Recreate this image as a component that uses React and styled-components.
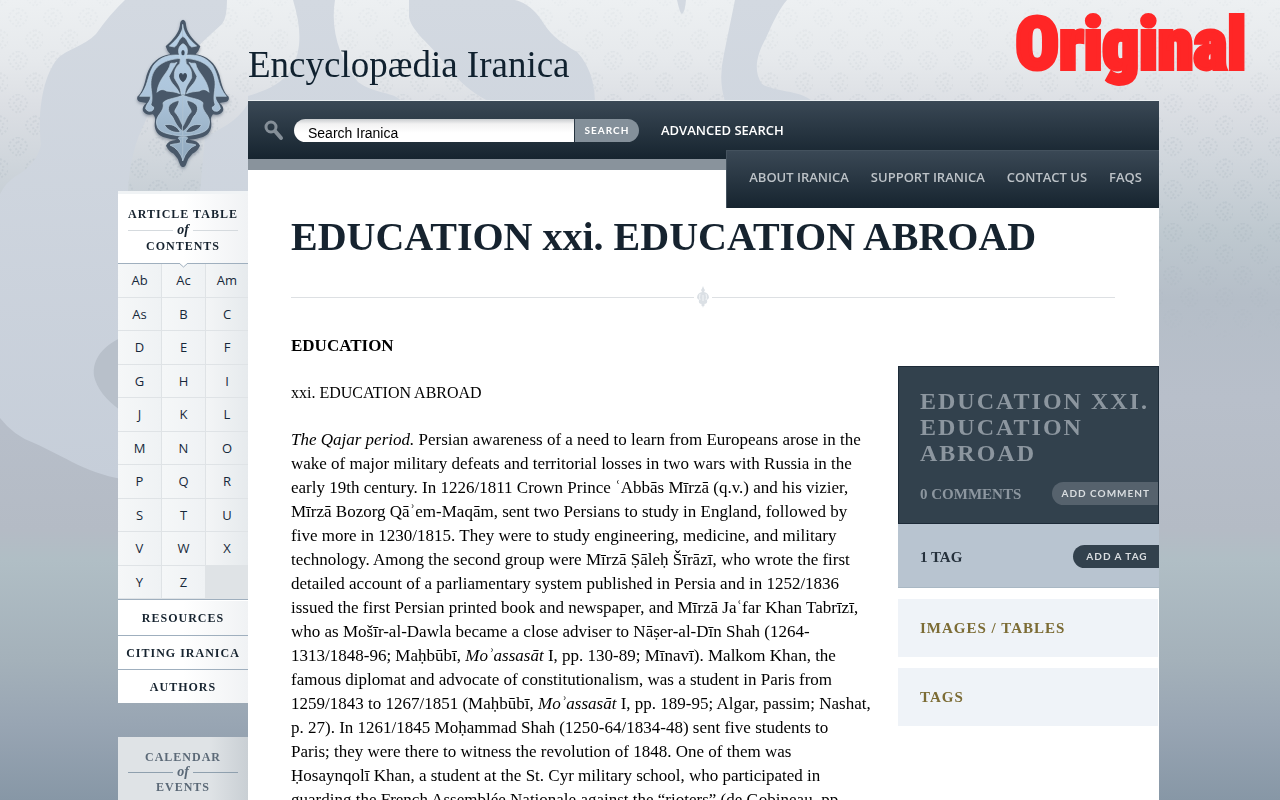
import React from "react";
import styled, { createGlobalStyle, css } from "styled-components";

const serif = `Georgia, "Liberation Serif", serif`;
const sans = `"Open Sans", "Noto Sans", sans-serif`;

const GlobalStyle = createGlobalStyle`
  *, *::before, *::after { box-sizing: border-box; }
  html { background: #8797a6; }
  body {
    margin: 0;
    overflow-x: hidden;
    font-family: ${serif};
    color: #000;
  }
  h1, h2, h3, p, ul { margin: 0; padding: 0; }
  ul { list-style: none; }
  a { color: inherit; text-decoration: none; }
  button { border: 0; cursor: pointer; }
`;

const Backdrop = styled.div`
  position: fixed;
  inset: 0;
  z-index: -1;
  background: linear-gradient(
    to bottom,
    #edf0f2 0,
    #e6e9ec 60px,
    #dcdfe4 105px,
    #d0d6dc 160px,
    #bec8cf 235px,
    #b5bec8 300px,
    #b8bfca 400px,
    #b4bbc5 530px,
    #b0bec5 560px,
    #a4b1ba 660px,
    #98a5b3 725px,
    #8797a6 800px
  );
  svg { display: block; width: 100%; height: 800px; }
`;

const Stamp = styled.div`
  position: absolute;
  top: 0;
  right: 34px;
  font: 900 72px/90px Impact, "Liberation Sans Narrow", "Roboto Condensed", "Open Sans Condensed", "Liberation Sans", sans-serif;
  color: #ff2626;
  -webkit-text-stroke: 4px #ff2626;
  pointer-events: none;
`;

const Shell = styled.div`
  display: grid;
  grid-template-columns: 130px minmax(0, 1fr);
  max-width: 1044px;
  min-height: 100vh;
  margin: 0 auto;
  padding-right: 3px;
`;

const Sidebar = styled.div`
  display: flex;
  flex-direction: column;
`;

const LogoLink = styled.a`
  display: flex;
  justify-content: center;
  height: 191px;
  padding-top: 15px;
`;

const panelShade = "linear-gradient(to right, #fff 50%, #f0f2f4)";
const mutedShade = "linear-gradient(to right, #dfe3e6 70%, #c9cfd4)";

const BoxTitle = styled.h2`
  display: flex;
  flex-direction: column;
  padding: 12px 10px 9px;
  font: bold 12px/16px ${serif};
  letter-spacing: 1px;
  text-align: center;
  white-space: nowrap;
  color: ${(p) => (p.$muted ? "#5b6977" : "#16232f")};
  background: ${(p) => (p.$muted ? mutedShade : panelShade)};
  ${(p) =>
    !p.$muted &&
    css`
      height: 73px;
      border-top: 3px solid #f0f3f5;
      border-bottom: 1px solid #9fafbe;
    `}
`;

const Of = styled.span`
  display: flex;
  align-items: center;
  gap: 4px;
  font-size: 14px;
  line-height: ${(p) => (p.$muted ? "14px" : "16px")};
  font-style: italic;
  letter-spacing: 0;
  &::before, &::after {
    content: "";
    flex: 1;
    height: 1px;
    background: ${(p) => (p.$muted ? "#8fa0ae" : "#d5dade")};
  }
`;

const Letters = styled.ul`
  position: relative;
  display: grid;
  grid-template-columns: 44px 44px 1fr;
  grid-template-rows: repeat(10, 1fr);
  height: 336px;
  background: #dfe3e6;
  border-bottom: 1px solid #9fafbe;
`;

const Notch = styled.svg`
  position: absolute;
  top: -1px;
  left: 60px;
`;

const Letter = styled.li`
  display: flex;
  border: solid #dfe3e6;
  border-width: 0 1px 1px 0;
  background: linear-gradient(to right, #f5f7f8, #eff2f4);
  &:nth-of-type(3n) { border-right: 0; background: linear-gradient(to right, #f3f5f6, #e6eaed); }
  a {
    flex: 1;
    text-align: center;
    font: 13px/32px ${sans};
    color: #16283a;
  }
`;

const SideLink = styled.a`
  display: block;
  height: 34px;
  font: bold 12px/34px ${serif};
  letter-spacing: 1px;
  text-align: center;
  white-space: nowrap;
  color: #16232f;
  background: ${panelShade};
  & + & { border-top: 1px solid #9fafbe; }
`;

const SideLinks = styled.nav`
  padding-top: 1px;
  background: #fff;
  margin-bottom: 34px;
`;

const Main = styled.div`
  display: flex;
  flex-direction: column;
`;

const SiteName = styled.a`
  height: 101px;
  padding-top: 44px;
  font: 37px/42px ${serif};
  color: #10212f;
  border-bottom: 1px solid #e9edf0;
`;

const navShade = "linear-gradient(to bottom, #3a4855, #16242f)";

const TopBar = styled.header`
  display: flex;
  align-items: center;
  height: 69px;
  padding: 0 15px;
  background: ${navShade};
  border-bottom: 11px solid #89939c;
  background-clip: padding-box;
`;

const SearchForm = styled.form`
  display: flex;
  align-items: center;
  height: 23px;
  svg { margin-right: 10px; }
`;

const SearchInput = styled.input`
  width: 280px;
  height: 23px;
  padding: 5px 14px 0;
  border: 0;
  border-radius: 12px 0 0 12px;
  outline: 0;
  background: linear-gradient(to bottom, #c9cccf 0, #f2f2f2 5px, #fff 14px);
  font: 14px/18px "Liberation Sans", Arial, sans-serif;
  color: #000;
`;

const SearchButton = styled.button`
  width: 64px;
  height: 23px;
  margin-left: 1px;
  padding: 0;
  border-radius: 0 12px 12px 0;
  background: #84909a;
  font: bold 10px/23px Lato, sans-serif;
  letter-spacing: 1px;
  color: #fff;
`;

const Advanced = styled.a`
  margin-left: 22px;
  font: 600 13px/20px ${sans};
  color: #fff;
  white-space: nowrap;
`;

const SubNav = styled.nav`
  display: flex;
  gap: 22px;
  height: 58px;
  margin: -20px 0 0 auto;
  padding: 0 17px 0 22px;
  background: ${navShade};
  border: solid #44525e;
  border-width: 1px 0 0 1px;
  font: 600 13px/53px ${sans};
  color: #bcc2c7;
  white-space: nowrap;
`;

const Page = styled.main`
  flex: 1;
  padding-left: 43px;
`;

const White = styled.div`
  display: flex;
  flex-direction: column;
  flex: 1;
  background: #fff;
`;

const Title = styled.h1`
  padding-top: 6px;
  font: bold 40px/46px ${serif};
  color: #16232f;
`;

const Divider = styled.div`
  display: flex;
  align-items: center;
  gap: 2px;
  margin: 26px 44px 26px 0;
  &::before, &::after {
    content: "";
    flex: 1;
    height: 1px;
    background: #dde0e3;
  }
`;

const Columns = styled.div`
  display: flex;
  justify-content: space-between;
`;

const Article = styled.article`
  flex: 1;
  min-width: 0;
  padding-bottom: 24px;
  font: 16px/24px ${serif};
  h3 { font-size: 17px; line-height: 24px; }
  h3, p { margin-bottom: 23px; }
`;

const Story = styled.p`
  font-size: 17px;
`;

const Line = styled.span`
  display: block;
  white-space: nowrap;
`;

const Aside = styled.aside`
  flex: none;
  width: 261px;
  margin-top: 32px;
  display: flex;
  flex-direction: column;
`;

const Comments = styled.section`
  height: 158px;
  padding: 21px 0 0 21px;
  border: 1px solid #1d2b38;
  background: #32414d;
  color: #8c969f;
  h2 {
    font: bold 24px/26px ${serif};
    letter-spacing: 2px;
  }
`;

const AsideRow = styled.div`
  display: flex;
  justify-content: space-between;
  align-items: center;
  font: bold 15px/20px ${serif};
`;

const CommentRow = styled(AsideRow)`
  margin-top: 16px;
`;

const TagRow = styled(AsideRow)`
  height: 64px;
  padding: 2px 0 0 22px;
  margin-bottom: 11px;
  border-bottom: 1px solid #a9b8c4;
  background: #b8c4d0;
  color: #25313c;
`;

const Pill = styled.button`
  min-width: 86px;
  height: 23px;
  padding: 0 8px 0 10px;
  border-radius: 12px 0 0 12px;
  background: ${(p) => (p.$dark ? "#32414d" : "#56626d")};
  font: bold 10px/23px Lato, sans-serif;
  letter-spacing: 1px;
  color: #d9dde0;
`;

const FoldLink = styled.a`
  display: block;
  height: 58px;
  padding-left: 22px;
  margin: 0 1px 11px 0;
  background: #eff3f8;
  font: bold 15px/58px ${serif};
  letter-spacing: 1px;
  color: #7c6c35;
`;

const Logo = () => (
  <svg width="110" height="160" viewBox="-7 0 330 480" role="img" aria-label="Encyclopædia Iranica emblem">
    <defs>
      <linearGradient id="steel" gradientUnits="userSpaceOnUse" x1="0" y1="20" x2="0" y2="450">
        <stop offset="0" stopColor="#b9d3ea" />
        <stop offset=".5" stopColor="#adc5db" />
        <stop offset="1" stopColor="#8ea6bb" />
      </linearGradient>
      <filter id="soft" x="-20%" y="-10%" width="140%" height="120%">
        <feDropShadow dx="0" dy="5" stdDeviation="4" floodColor="#5d6b7a" floodOpacity=".6" />
      </filter>
      <g id="half">
        <path fill="#485869" d="M159 14Q149 15 149 30C146 52 134 64 122 79L106 94Q110 108 120 118C88 121 60 144 49 180C42 212 34 236 21 245Q18 256 28 260L48 264Q34 276 38 288Q46 302 68 298Q76 306 74 318C70 340 78 358 98 366Q122 374 140 374Q112 376 107 392Q116 410 130 416Q144 430 148 446Q151 456 159 456Z" />
        <g fill="url(#steel)" stroke="#c0d3e2" strokeWidth="2" strokeLinejoin="round">
          <path d="M159 28C156 54 142 72 117 93L132 96C143 91 143 72 159 64Z" />
          <path d="M152 121C112 116 84 130 68 154C50 186 54 214 28 244L60 244C62 260 46 266 46 282Q52 292 64 288Q72 284 70 276Q62 274 62 268C70 246 60 224 62 200C66 160 92 134 152 130Z" />
          <path d="M140 142C130 148 124 142 120 146C116 172 84 190 80 232C88 222 100 222 108 228C122 230 134 230 148 236C138 212 122 208 116 184Q128 160 140 142Z" />
          <path d="M159 240C140 250 110 250 98 263C106 292 70 300 80 332C84 352 110 358 159 364Z" />
          <path d="M159 366Q144 364 144 370Q160 384 140 386Q130 386 119 390Q146 400 159 438Z" />
        </g>
        <g fill="#485869" stroke="#c0d3e2" strokeWidth="2">
          <path d="M146 256C118 262 106 276 120 298C130 306 130 318 144 336Q151 346 160 350V336C149 320 149 308 134 292C130 284 147 272 146 256Z" />
          <path d="M102 330C122 324 142 334 150 352C132 354 114 348 102 330Z" />
        </g>
      </g>
    </defs>
    <g filter="url(#soft)">
      <use href="#half" />
      <use href="#half" transform="translate(316 0) scale(-1 1)" />
      <path d="M158 86C145 92 142 106 147 120Q152 136 148 146Q130 160 132 188C140 206 152 214 152 238H164C164 214 176 206 184 188Q186 160 168 146Q164 136 169 120C174 106 171 92 158 86Z" fill="url(#steel)" stroke="#c6d8e6" strokeWidth="2" />
      <path d="M158 202C142 190 144 174 152 174Q157 174 158 180Q159 174 164 174C172 174 174 190 158 202Z" fill="#3d4c5c" />
      <ellipse cx="158" cy="113" rx="5" ry="8" fill="#3d4c5c" />
    </g>
  </svg>
);

const Scenery = () => (
  <svg aria-hidden="true" preserveAspectRatio="xMidYMin slice" viewBox="0 0 1280 800">
    <defs>
      <pattern id="damask" width="35" height="43" patternUnits="userSpaceOnUse" x="8" y="8">
        <g id="bloom" fill="none" stroke="#7d929e" strokeWidth="2" strokeDasharray="2 2">
          <path d="M10 0q9 4 9 9q-1 6-9 10q-8-4-9-10q0-5 9-9z" />
          <path d="M10 4l4 5l-4 6l-4-6z" />
        </g>
        <use href="#bloom" x="17" y="22" />
      </pattern>
      <linearGradient id="fade" x1="0" y1="0" x2="0" y2="1">
        <stop offset="0" stopColor="#fff" stopOpacity=".25" />
        <stop offset=".4" stopColor="#fff" stopOpacity=".8" />
        <stop offset=".65" stopColor="#fff" stopOpacity=".8" />
        <stop offset="1" stopColor="#fff" stopOpacity="0" />
      </linearGradient>
      <linearGradient id="shadow" gradientUnits="userSpaceOnUse" x1="0" y1="0" x2="0" y2="480">
        <stop offset="0" stopColor="#d3d9e1" />
        <stop offset="1" stopColor="#c6ced9" />
      </linearGradient>
      <mask id="upper">
        <rect width="1280" height="340" fill="url(#fade)" />
      </mask>
    </defs>
    <g mask="url(#upper)">
      <rect width="1280" height="340" fill="url(#damask)" opacity=".14" />
    </g>
    <g fill="url(#shadow)">
      <path d="M125 0Q110 14 96 34C84 46 66 50 58 58C40 80 38 120 41 145Q36 165 16 176Q6 182 0 194V418Q14 436 34 443C64 456 90 476 130 480H250V100C238 122 224 126 205 138L200 191H128Q130 150 146 120C160 80 200 44 222 24Q227 18 227 0Z" />
      <path d="M293 0Q301 26 299 45C296 66 290 84 248 96V102H402C396 92 374 94 358 82C340 60 330 30 335 0Z" />
      <path d="M409 0V17C412 32 430 44 440 58Q462 88 488 101H595Q594 70 577 52C560 42 552 36 544 24Q532 4 515 0Z" />
      <path d="M677 0Q680 14 682 14Q685 12 686 0Z" />
      <path d="M735 0Q728 34 724 54Q718 80 725 101H812C800 90 774 92 762 84C752 70 758 52 766 38Q778 10 787 0Z" />
    </g>
    <path fill="#b8c0ca" d="M120 338C100 348 92 362 94 376Q98 394 120 410Z" />
  </svg>
);

const SearchIcon = () => (
  <svg width="21" height="22" viewBox="0 0 21 22" fill="none" stroke="#858f98" aria-hidden="true">
    <circle cx="8" cy="8" r="5" strokeWidth="3" />
    <path d="M12 12l6 7" strokeWidth="4" strokeLinecap="round" />
  </svg>
);

const Fleuron = () => (
  <svg width="14" height="22" viewBox="0 0 14 22" fill="#dbe0e5" aria-hidden="true">
    <path d="M7 0q1 3 2 4l-1 2q5 1 5 6l-2 2q1 4-3 4l1 1q-2 1-2 3q0-2-2-3l1-1q-4 0-3-4l-2-2q0-5 5-6L5 4q1-1 2-4z" />
    <path d="M4 8q-1 4 0 6M10 8q1 4 0 6M7 9v6" fill="none" stroke="#f3f5f7" strokeWidth="1" />
  </svg>
);

const letters = "Ab Ac Am As B C D E F G H I J K L M N O P Q R S T U V W X Y Z".split(" ");

const story = [
  <><i>The Qajar period.</i> Persian awareness of a need to learn from Europeans arose in the</>,
  "wake of major military defeats and territorial losses in two wars with Russia in the",
  "early 19th century. In 1226/1811 Crown Prince ʿAbbās Mīrzā (q.v.) and his vizier,",
  "Mīrzā Bozorg Qāʾem-Maqām, sent two Persians to study in England, followed by",
  "five more in 1230/1815. They were to study engineering, medicine, and military",
  "technology. Among the second group were Mīrzā Ṣāleḥ Šīrāzī, who wrote the first",
  "detailed account of a parliamentary system published in Persia and in 1252/1836",
  "issued the first Persian printed book and newspaper, and Mīrzā Jaʿfar Khan Tabrīzī,",
  "who as Mošīr-al-Dawla became a close adviser to Nāṣer-al-Dīn Shah (1264-",
  <>1313/1848-96; Maḥbūbī, <i>Moʾassasāt</i> I, pp. 130-89; Mīnavī). Malkom Khan, the</>,
  "famous diplomat and advocate of constitutionalism, was a student in Paris from",
  <>1259/1843 to 1267/1851 (Maḥbūbī, <i>Moʾassasāt</i> I, pp. 189-95; Algar, passim; Nashat,</>,
  "p. 27). In 1261/1845 Moḥammad Shah (1250-64/1834-48) sent five students to",
  "Paris; they were there to witness the revolution of 1848. One of them was",
  "Ḥosaynqolī Khan, a student at the St. Cyr military school, who participated in",
  "guarding the French Assemblée Nationale against the “rioters” (de Gobineau, pp.",
];

export default function App() {
  return (
    <>
      <GlobalStyle />
      <Backdrop><Scenery /></Backdrop>
      <Shell>
        <Sidebar>
          <LogoLink href="#home"><Logo /></LogoLink>
          <BoxTitle><span>ARTICLE TABLE</span><Of>of</Of><span>CONTENTS</span></BoxTitle>
          <Letters>
            {letters.map((l) => (
              <Letter key={l}><a href={`#${l}`}>{l}</a></Letter>
            ))}
            <Notch width="11" height="6" viewBox="0 0 11 6" aria-hidden="true">
              <path d="M1 0l4.500 4L10 0" fill="#fff" stroke="#9fafbe" />
            </Notch>
          </Letters>
          <SideLinks>
            <SideLink href="#resources">RESOURCES</SideLink>
            <SideLink href="#citing">CITING IRANICA</SideLink>
            <SideLink href="#authors">AUTHORS</SideLink>
          </SideLinks>
          <BoxTitle $muted><span>CALENDAR</span><Of $muted>of</Of><span>EVENTS</span></BoxTitle>
        </Sidebar>
        <Main>
          <SiteName href="#home">Encyclopædia Iranica</SiteName>
          <TopBar>
            <SearchForm role="search" onSubmit={(e) => e.preventDefault()}>
              <SearchIcon />
              <SearchInput type="text" aria-label="Search Iranica" defaultValue="Search Iranica" />
              <SearchButton type="submit">SEARCH</SearchButton>
            </SearchForm>
            <Advanced href="#advanced">ADVANCED SEARCH</Advanced>
          </TopBar>
          <White>
            <SubNav>
              <a href="#about">ABOUT IRANICA</a>
              <a href="#support">SUPPORT IRANICA</a>
              <a href="#contact">CONTACT US</a>
              <a href="#faqs">FAQS</a>
            </SubNav>
            <Page>
              <Title>EDUCATION xxi. EDUCATION ABROAD</Title>
              <Divider><Fleuron /></Divider>
              <Columns>
                <Article>
                  <h3>EDUCATION</h3>
                  <p>xxi. EDUCATION ABROAD</p>
                  <Story>{story.map((line, i) => <Line key={i}>{line} </Line>)}</Story>
                </Article>
                <Aside>
                  <Comments>
                    <h2>EDUCATION XXI. EDUCATION ABROAD</h2>
                    <CommentRow><span>0 COMMENTS</span><Pill type="button">ADD COMMENT</Pill></CommentRow>
                  </Comments>
                  <TagRow><span>1 TAG</span><Pill type="button" $dark>ADD A TAG</Pill></TagRow>
                  <FoldLink href="#images">IMAGES / TABLES</FoldLink>
                  <FoldLink href="#tags">TAGS</FoldLink>
                </Aside>
              </Columns>
            </Page>
          </White>
        </Main>
      </Shell>
      <Stamp>Original</Stamp>
    </>
  );
}
